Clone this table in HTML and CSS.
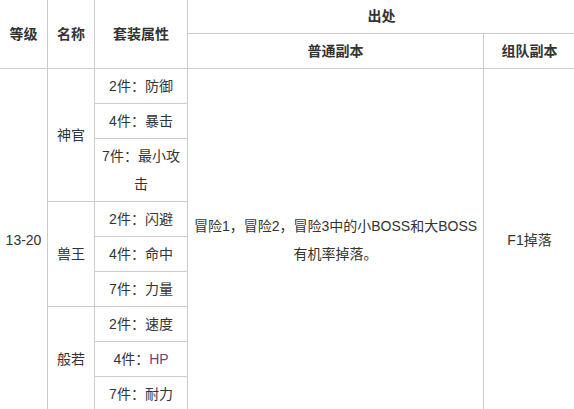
FILE: index.html
```html
<!DOCTYPE html>
<html lang="zh-CN">
<head>
<meta charset="utf-8">
<title>套装掉落</title>
<link rel="stylesheet" href="styles.css">
</head>
<body>
<table class="drops">
  <colgroup>
    <col class="c-level">
    <col class="c-name">
    <col class="c-attr">
    <col class="c-normal">
    <col class="c-team">
  </colgroup>
  <thead>
    <tr class="h1">
      <th rowspan="2">等级</th>
      <th rowspan="2">名称</th>
      <th rowspan="2">套装属性</th>
      <th colspan="2">出处</th>
    </tr>
    <tr class="h2">
      <th>普通副本</th>
      <th>组队副本</th>
    </tr>
  </thead>
  <tbody>
    <tr>
      <td rowspan="9">13-20</td>
      <td rowspan="3">神官</td>
      <td>2件：防御</td>
      <td rowspan="9">冒险1，冒险2，冒险3中的小BOSS和大BOSS有机率掉落。</td>
      <td rowspan="9">F1掉落</td>
    </tr>
    <tr><td>4件：暴击</td></tr>
    <tr><td>7件：最小攻击</td></tr>
    <tr>
      <td rowspan="3">兽王</td>
      <td>2件：闪避</td>
    </tr>
    <tr><td>4件：命中</td></tr>
    <tr><td>7件：力量</td></tr>
    <tr>
      <td rowspan="3">般若</td>
      <td>2件：速度</td>
    </tr>
    <tr><td>4件：<span class="hp">HP</span></td></tr>
    <tr><td>7件：耐力</td></tr>
  </tbody>
</table>
</body>
</html>
```
FILE: styles.css
```css
html, body {
  margin: 0;
  padding: 0;
  background: #fff;
}

.drops {
  border-collapse: collapse;
  table-layout: fixed;
  width: 576px;
  margin: -1px 0 0 -1px;
  font-family: "Liberation Sans", "Noto Sans CJK SC", sans-serif;
  font-size: 14px;
  color: #333;
}

.c-level { width: 48px; }
.c-name { width: 47px; }
.c-attr { width: 93px; }
.c-normal { width: 296px; }
.c-team { width: 92px; }

.drops th,
.drops td {
  border: 1px solid #ccc;
  text-align: center;
  vertical-align: middle;
  line-height: 28px;
  padding: 3px 5px;
}

.drops th {
  font-weight: bold;
  color: #333;
}

.drops .h1 th {
  padding: 2px 5px 3px;
}

.hp {
  color: #7a3a7c;
}
```
